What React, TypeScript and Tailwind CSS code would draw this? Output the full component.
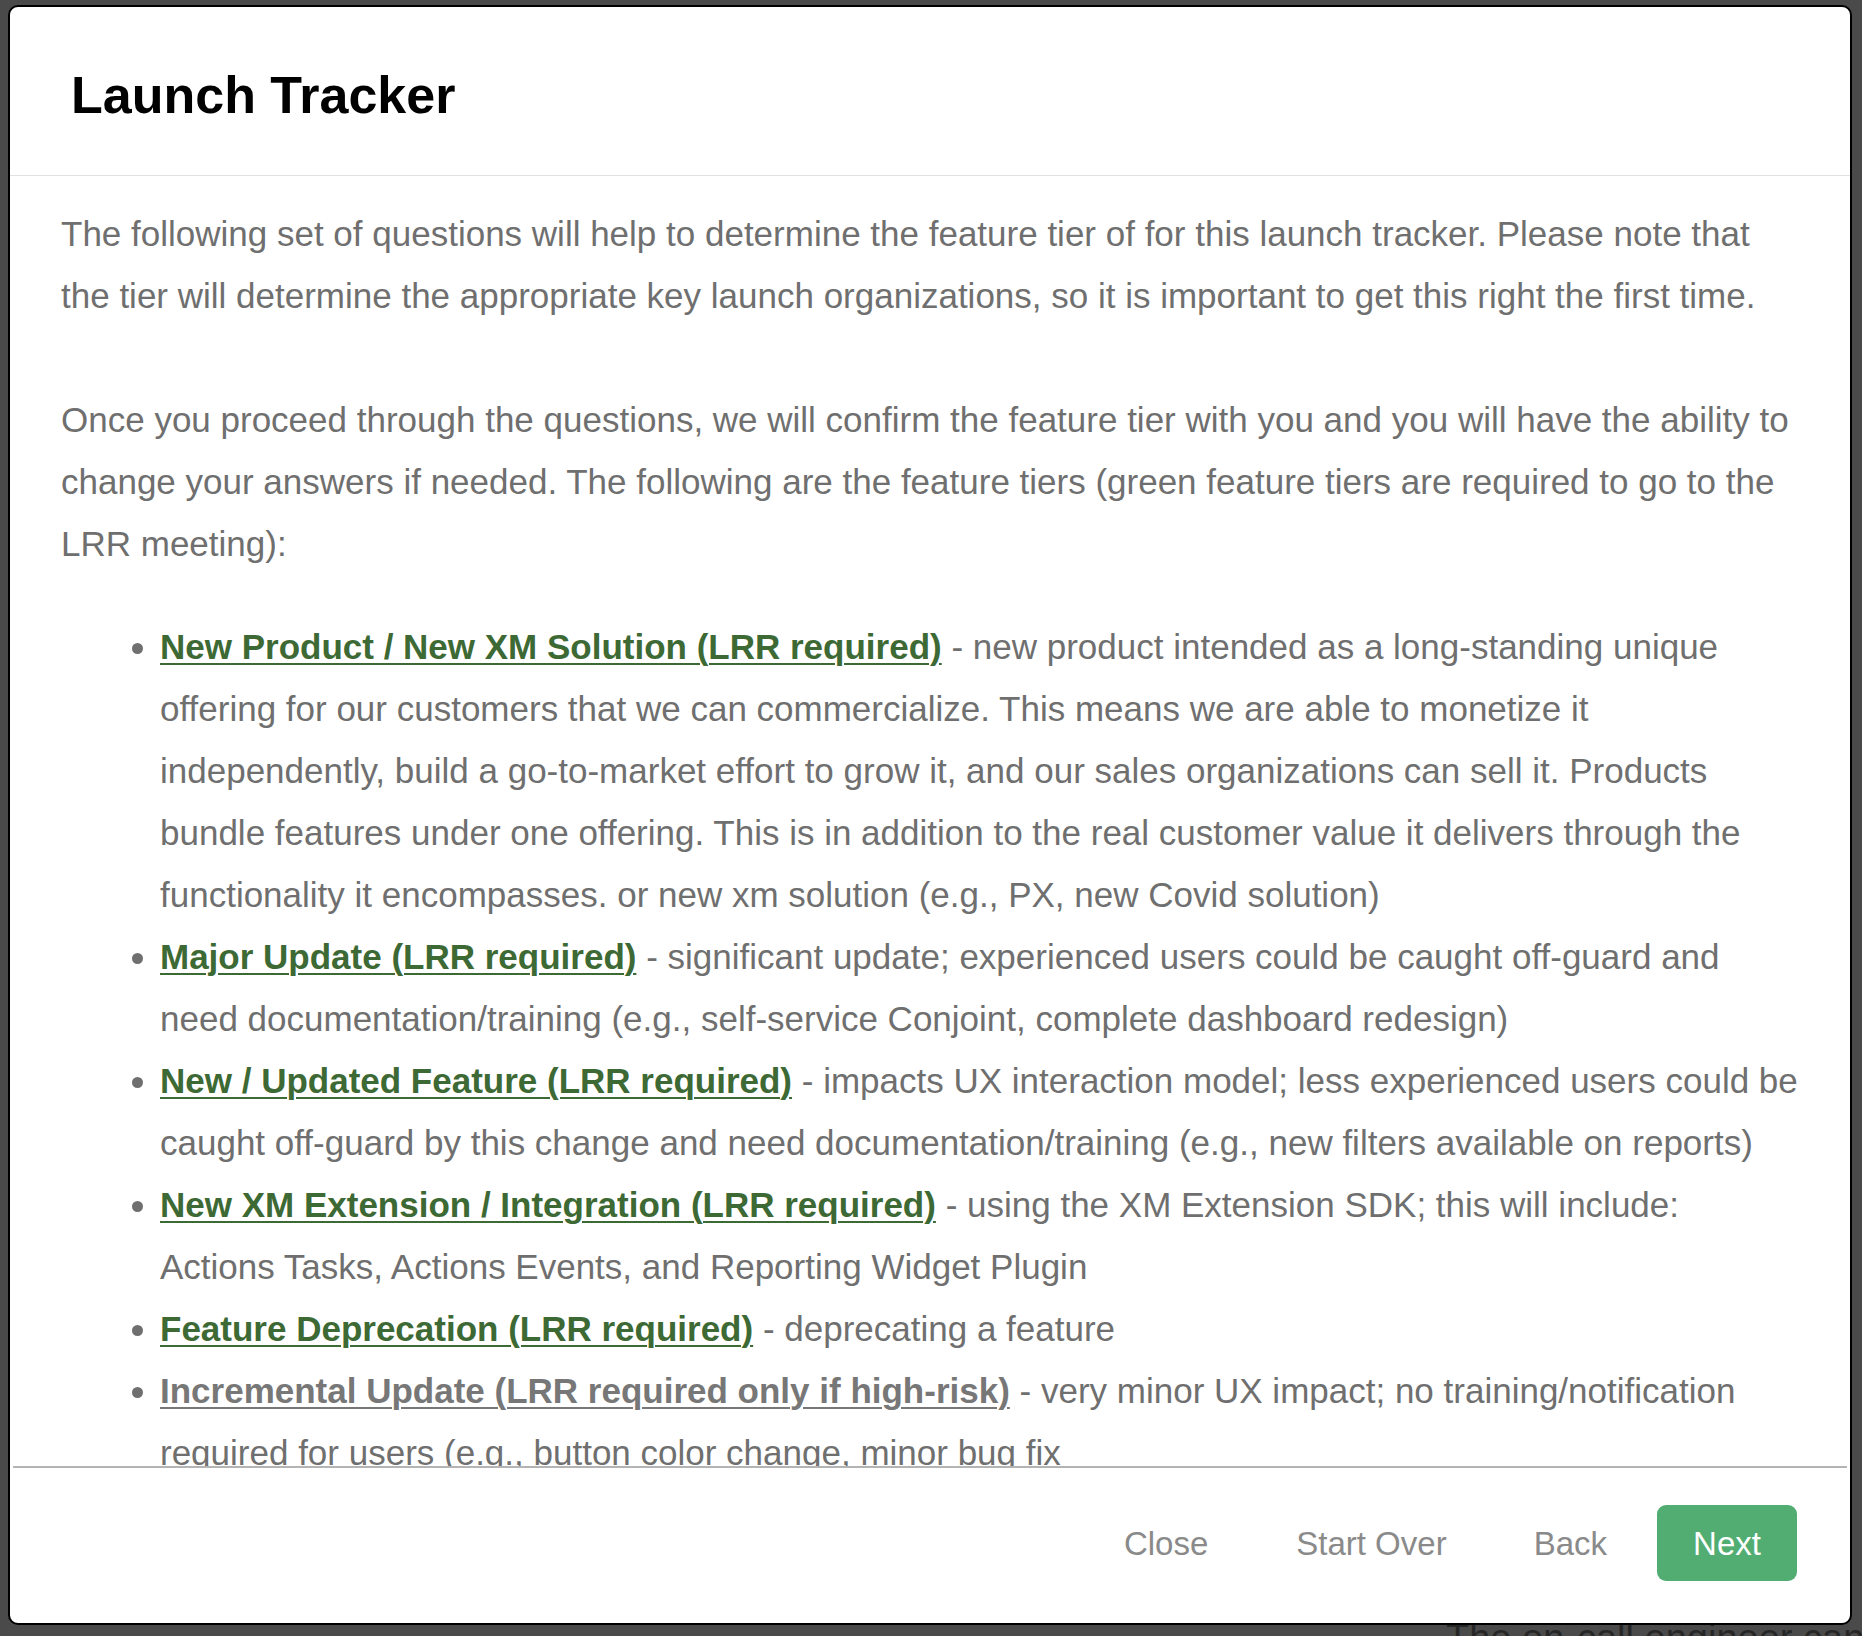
import React from "react";

const linkGreen = "font-bold text-[#3d6934] underline decoration-[2px] underline-offset-[4px]";
const linkGray = "font-bold text-[#777777] underline decoration-[2px] underline-offset-[4px]";

export default function App() {
  return (
    <div className="relative w-[1862px] h-[1636px] overflow-hidden bg-[#4a4a4a] pl-[8px] pt-[5px] font-['Liberation_Sans',Arial,Helvetica,sans-serif]">
      <div className="absolute left-[1446px] top-[1618px] whitespace-nowrap text-[38px] leading-[40px] text-[#262626]">
        The on-call engineer can be
      </div>
      <div className="relative flex h-[1620px] w-[1844px] flex-col overflow-hidden rounded-[10px] border-2 border-black bg-white">
        <div className="flex h-[169px] shrink-0 items-center border-b border-[#e2e2e2] pl-[61px] pt-[8px]">
          <h1 className="text-[52px] font-bold leading-none text-black">Launch Tracker</h1>
        </div>
        <div className="min-h-0 flex-1 overflow-hidden px-[51px] pt-[27px] text-[35px] leading-[62px] text-[#6f6f6f]">
          <p className="mb-[62px]">
            The following set of questions will help to determine the feature tier of for this launch tracker. Please note that the tier will determine the appropriate key launch organizations, so it is important to get this right the first time.
          </p>
          <p>
            Once you proceed through the questions, we will confirm the feature tier with you and you will have the ability to change your answers if needed. The following are the feature tiers (green feature tiers are required to go to the LRR meeting):
          </p>
          <ul className="mt-[41px] list-disc pl-[99px]">
            <li>
              <span className={linkGreen}>New Product / New XM Solution (LRR required)</span> - new product intended as a long-standing unique offering for our customers that we can commercialize. This means we are able to monetize it independently, build a go-to-market effort to grow it, and our sales organizations can sell it. Products bundle features under one offering. This is in addition to the real customer value it delivers through the functionality it encompasses. or new xm solution (e.g., PX, new Covid solution)
            </li>
            <li>
              <span className={linkGreen}>Major Update (LRR required)</span> - significant update; experienced users could be caught off-guard and need documentation/training (e.g., self-service Conjoint, complete dashboard redesign)
            </li>
            <li>
              <span className={linkGreen}>New / Updated Feature (LRR required)</span> - impacts UX interaction model; less experienced users could be caught off-guard by this change and need documentation/training (e.g., new filters available on reports)
            </li>
            <li>
              <span className={linkGreen}>New XM Extension / Integration (LRR required)</span> - using the XM Extension SDK; this will include: Actions Tasks, Actions Events, and Reporting Widget Plugin
            </li>
            <li>
              <span className={linkGreen}>Feature Deprecation (LRR required)</span> - deprecating a feature
            </li>
            <li>
              <span className={linkGray}>Incremental Update (LRR required only if high-risk)</span> - very minor UX impact; no training/notification required for users (e.g., button color change, minor bug fix
            </li>
          </ul>
        </div>
        <div className="mx-[3px] h-[2px] shrink-0 bg-[#b4b4b4]" />
        <div className="flex h-[155px] shrink-0 items-center justify-end pb-[5px] pr-[53px] text-[33px] text-[#8a8a8a]">
          <button className="leading-none">Close</button>
          <button className="ml-[88px] leading-none">Start Over</button>
          <button className="ml-[87px] leading-none">Back</button>
          <button className="ml-[50px] flex h-[76px] w-[140px] items-center justify-center rounded-[9px] bg-[#52ad73] leading-none text-white">
            Next
          </button>
        </div>
      </div>
    </div>
  );
}
